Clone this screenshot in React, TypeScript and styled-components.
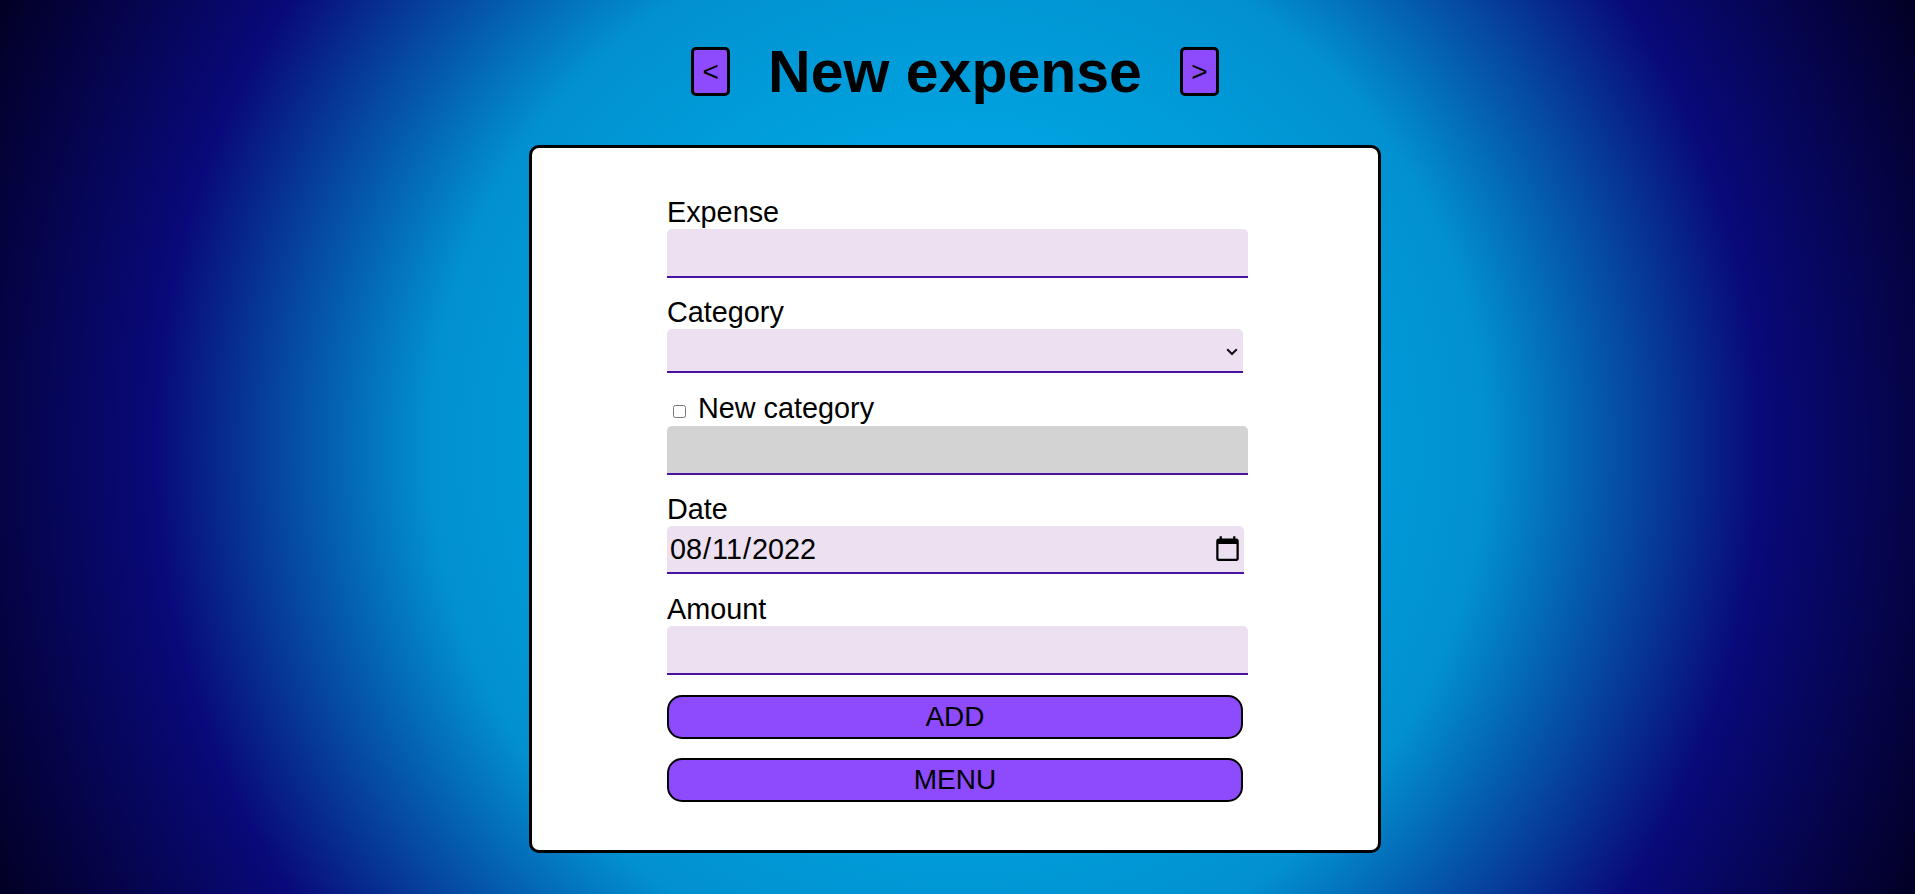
import React from "react";
import styled, { createGlobalStyle } from "styled-components";

const GlobalStyle = createGlobalStyle`
  html, body {
    margin: 0;
    padding: 0;
  }
  body {
    font-family: "Liberation Sans", Arial, sans-serif;
  }
  * {
    box-sizing: border-box;
  }
`;

const Page = styled.div`
  min-height: 100vh;
  padding-right: 5px;
  display: flex;
  flex-direction: column;
  align-items: center;
  background: radial-gradient(
    circle farthest-corner at 50% 50%,
    #00b0ec 0%,
    #00a2df 30%,
    #0290d0 50%,
    #09097a 76%,
    #020024 100%
  );
`;

const Header = styled.header`
  margin-top: 47px;
  height: 49px;
  display: flex;
  align-items: center;
  gap: 38px;
`;

const Title = styled.h1`
  margin: 0;
  font-size: 59px;
  line-height: 60px;
  font-weight: 700;
  color: #000;
`;

const NavButton = styled.button`
  width: 39px;
  height: 49px;
  padding: 0;
  border: 3px solid #000;
  border-radius: 5px;
  background: #8d4bfd;
  color: #000;
  font-family: "Liberation Sans", Arial, sans-serif;
  font-size: 28px;
  line-height: 1;
  cursor: pointer;
`;

const Card = styled.main`
  margin-top: 49px;
  width: 852px;
  height: 708px;
  border: 3px solid #000;
  border-radius: 10px;
  background: #fff;
  padding-top: 47.5px;
  display: flex;
  flex-direction: column;
  align-items: center;
`;

const Form = styled.form`
  width: 576px;
  display: flex;
  flex-direction: column;
  align-items: flex-start;
  gap: 18.5px;
`;

const Field = styled.div`
  display: flex;
  flex-direction: column;
  align-items: flex-start;
`;

const Label = styled.label`
  display: block;
  font-size: 28.8px;
  line-height: 33px;
  color: #000;
`;

const CheckRow = styled.label`
  display: block;
  height: 34px;
  font-size: 28.8px;
  line-height: 33px;
  color: #000;

  input {
    margin: 3px 4px 3px 6px;
    width: 13px;
    height: 13px;
  }
`;

const fieldBase = `
  border: none;
  border-bottom: 2px solid #4a12a0;
  border-radius: 5px 5px 0 0;
  background: #ece0f1;
  font-family: "Liberation Sans", Arial, sans-serif;
  font-size: 28.8px;
  color: #000;
  outline: none;
`;

const TextInput = styled.input<{ $width: number }>`
  ${fieldBase}
  width: ${(p) => p.$width}px;
  height: 49px;
  padding: 0 2px;

  &:disabled {
    background: #d3d3d3;
  }
`;

const SelectWrap = styled.div`
  position: relative;
  width: 576px;
  height: 44px;
`;

const SelectBox = styled.select`
  ${fieldBase}
  appearance: none;
  -webkit-appearance: none;
  width: 100%;
  height: 100%;
  padding: 0 24px 0 2px;
`;

const Chevron = styled.svg`
  position: absolute;
  right: 5px;
  top: 19px;
  width: 12px;
  height: 8px;
  pointer-events: none;
`;

const DateInput = styled.input`
  ${fieldBase}
  width: 577px;
  height: 48px;
  padding: 0 0 0 2px;
  line-height: 33px;
`;

const ActionButton = styled.button<{ $offset: number }>`
  margin-top: ${(p) => p.$offset}px;
  width: 576px;
  height: 44px;
  border: 2px solid #000;
  border-radius: 15px;
  background: #8d4bfd;
  color: #000;
  font-family: "Liberation Sans", Arial, sans-serif;
  font-size: 28px;
  line-height: 1;
  cursor: pointer;
`;

export default function App() {
  return (
    <>
      <GlobalStyle />
      <Page>
        <Header>
          <NavButton type="button">&lt;</NavButton>
          <Title>New expense</Title>
          <NavButton type="button">&gt;</NavButton>
        </Header>
        <Card>
          <Form onSubmit={(e) => e.preventDefault()}>
            <Field>
              <Label htmlFor="expense">Expense</Label>
              <TextInput id="expense" type="text" $width={581} />
            </Field>
            <Field>
              <Label htmlFor="category">Category</Label>
              <SelectWrap>
                <SelectBox id="category" defaultValue="">
                  <option value=""></option>
                  <option value="food">Food</option>
                  <option value="transport">Transport</option>
                </SelectBox>
                <Chevron viewBox="0 0 12 8" aria-hidden="true">
                  <path
                    d="M1.2 1.2 L6 6 L10.8 1.2"
                    fill="none"
                    stroke="#111"
                    strokeWidth="2"
                  />
                </Chevron>
              </SelectWrap>
            </Field>
            <Field>
              <CheckRow>
                <input type="checkbox" /> New category
              </CheckRow>
              <TextInput type="text" disabled $width={581} />
            </Field>
            <Field>
              <Label htmlFor="date">Date</Label>
              <DateInput id="date" type="date" defaultValue="2022-08-11" />
            </Field>
            <Field>
              <Label htmlFor="amount">Amount</Label>
              <TextInput id="amount" type="number" $width={581} />
            </Field>
            <ActionButton type="submit" $offset={1.5}>ADD</ActionButton>
            <ActionButton type="button" $offset={0.5}>MENU</ActionButton>
          </Form>
        </Card>
      </Page>
    </>
  );
}
